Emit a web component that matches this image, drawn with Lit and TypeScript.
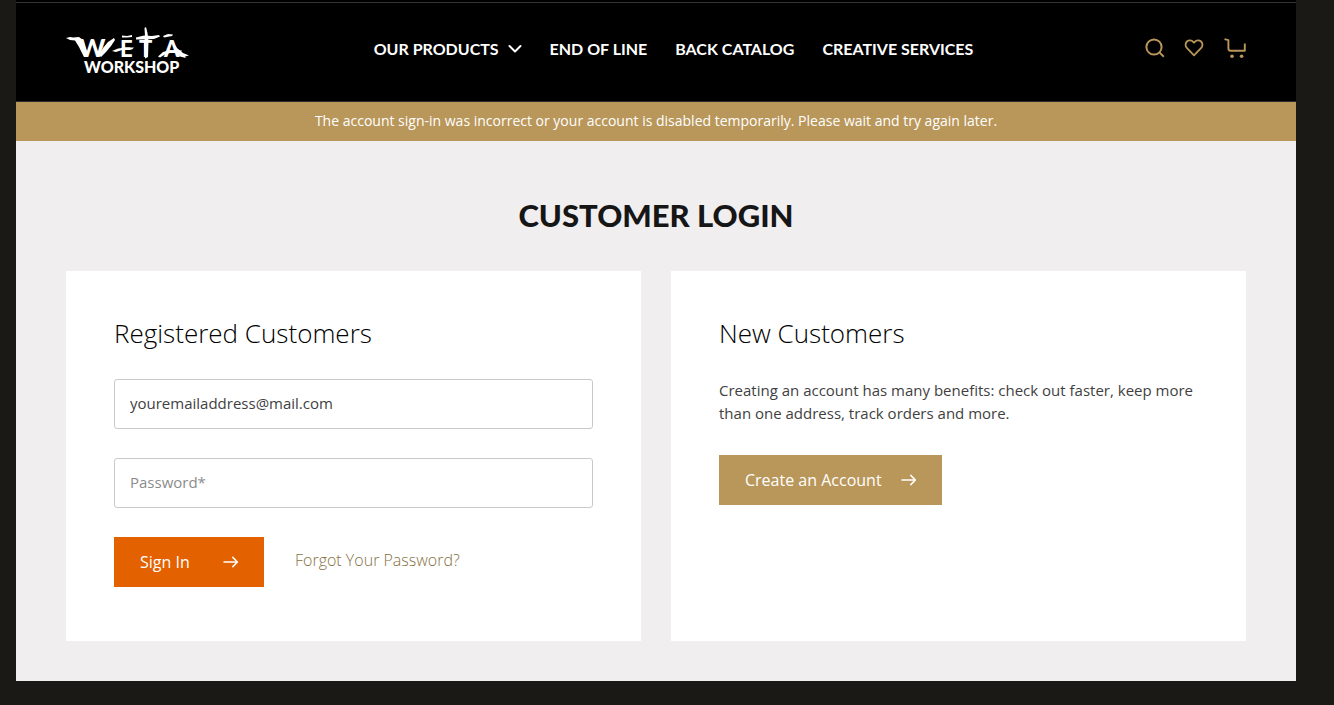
import { LitElement, html, css, svg } from "lit";
import { customElement, property, state } from "lit/decorators.js";

const arrow = html`<svg class="arrow" viewBox="0 0 16 12" width="16" height="12" aria-hidden="true">
  <path d="M1 6H14.2M9.8 1.4L14.4 6L9.8 10.6" fill="none" stroke="currentColor" stroke-width="1.5" stroke-linecap="round" stroke-linejoin="round" />
</svg>`;

@customElement("site-logo")
export class SiteLogo extends LitElement {
  static styles = css`
    :host { display: block; }
    .logo { display: block; fill: #fff; font-family: Lato, sans-serif; font-weight: 900; }
    .big { font-size: 25px; }
    .mid { font-size: 22px; }
    .small { font-size: 16px; }
  `;
  render() {
    return html`<svg class="logo" width="124" height="48" viewBox="0 0 124 48" role="img" aria-label="Weta Workshop">
      <text class="big" x="13" y="30">W</text>
      <text class="mid" x="54" y="30">E</text>
      <text class="mid" x="73" y="30">T</text>
      <text class="mid" x="98" y="30">A</text>
      ${svg`
        <path d="M0 11L4 10L7 10.5L13 10L17 13L22 27L21 30L18 30L13 20L9 13.500L4 13Z" />
        <path d="M33 28L37 21L42 15L48 11L49 13L45 19L40 25L35 30Z" />
        <path d="M56 8.5L61 9L66 8L66 10L61 10.5L56 10.5Z" />
        <path d="M46 24L52 21.500L60 20.500L68 20.5L66 22.500L56 23L50 25Z" />
        <path d="M70 10.5L78 8.5L86 9L93 8L94 9.5L88 12L76 12.5L70 12.500Z" />
        <path d="M78.5 1L80 0L81.500 6L82.500 14L82 30L79 31.500L78 18L79 9Z" />
        <path d="M97 9L102 7L107 7.5L106 9L98 10.500Z" />
        <path d="M92 29.500L97 25L104 23L116 23.500L115 25L106 25.500L99 27.500L94 30.5Z" />
        <path d="M107 15L111 21L117 26L123 28.5L119 29.5L120 31L114 29.500L109 25Z" />
      `}
      <text class="small" x="18" y="46">WORKSHOP</text>
    </svg>`;
  }
}

@customElement("site-header")
export class SiteHeader extends LitElement {
  @property({ type: Array }) items: string[] = [];
  static styles = css`
    :host { display: block; background: #000; border-top: 1px solid #33332f; border-bottom: 1px solid #2b2b30; }
    .bar { display: flex; align-items: center; justify-content: space-between; gap: 20px; height: 98px; padding: 0 49px 0 50px; }
    nav { display: flex; align-items: center; gap: 28px; padding: 0 0 6px 12px; }
    a { color: #fff; text-decoration: none; }
    nav a { display: flex; align-items: center; gap: 9px; font: 700 16px/20px Lato, sans-serif; text-transform: uppercase; white-space: nowrap; }
    .tools { display: flex; justify-content: flex-end; align-items: center; gap: 19px; padding-bottom: 8px; }
    .tools a { color: #b99659; display: flex; }
    site-logo { padding-bottom: 2px; }
  `;
  render() {
    return html`<header class="bar">
      <a href="#home"><site-logo></site-logo></a>
      <nav aria-label="Main">
        ${this.items.map((item, i) => html`<a href="#">${item}${i === 0
          ? html`<svg width="14" height="10" viewBox="0 0 14 10" aria-hidden="true"><path d="M1.5 2L7 7.5L12.5 2" fill="none" stroke="#fff" stroke-width="2" stroke-linecap="round" stroke-linejoin="round" /></svg>`
          : ""}</a>`)}
      </nav>
      <div class="tools">
        <a href="#search" aria-label="Search"><svg width="20" height="20" viewBox="0 0 20 20" fill="none" stroke="currentColor" stroke-width="2"><circle cx="9" cy="9" r="7.6" /><path d="M14.4 14.4L18.8 18.8" /></svg></a>
        <a href="#wishlist" aria-label="Wish list"><svg width="20" height="20" viewBox="0 0 20 20" fill="none" stroke="currentColor" stroke-width="1.8" stroke-linejoin="round"><path d="M10 17.3L3 10.2C1.1 8.2 1.1 5.2 2.9 3.5C4.8 1.8 7.6 2 9.2 3.8L10 4.7L10.8 3.8C12.4 2 15.2 1.8 17.1 3.5C18.9 5.2 18.9 8.2 17 10.2Z" /></svg></a>
        <a href="#cart" aria-label="Cart"><svg width="24" height="20" viewBox="0 0 24 20" fill="none" stroke="currentColor" stroke-width="1.9" stroke-linejoin="round"><path d="M1.5 1.2L5.4 2.2V10.6Q5.4 12.8 7.6 12.8H21.8V5.5" /><circle cx="9" cy="18.2" r="1.8" fill="currentColor" stroke="none" /><circle cx="18.6" cy="18.2" r="1.8" fill="currentColor" stroke="none" /></svg></a>
      </div>
    </header>`;
  }
}

@customElement("app-root")
export class AppRoot extends LitElement {
  @state() private email = "youremailaddress@mail.com";
  static styles = css`
    :host { display: block; box-sizing: border-box; min-height: 100vh; padding: 2px 38px 24px 16px; background: #1a1916; font-family: "Open Sans", sans-serif; color: #3f3f3f;
      background-image: linear-gradient(#000, #000); background-size: calc(100% - 54px) 2px; background-position: 16px 0; background-repeat: no-repeat; }
    * { box-sizing: border-box; }
    .notice { margin: 0; padding: 9px 50px 10px; background: #b99659; color: #fff; text-align: center; font: 500 14px/20px "Open Sans", sans-serif; }
    main { background: #f1eeef; padding: 54px 50px 40px; }
    h1 { margin: 0 0 36px; text-align: center; color: #161616; font: 900 31px/40px Lato, sans-serif; }
    .cards { display: grid; grid-template-columns: repeat(auto-fit, minmax(400px, 1fr)); gap: 30px; }
    .card { background: #fff; padding: 46px 48px 54px; }
    h2 { margin: 0 0 30px; color: #000; font: 300 26px/32px "Open Sans", sans-serif; }
    form { margin: 0; }
    .field { display: block; width: 100%; height: 50px; margin-bottom: 29px; padding: 0 15px 2px; border: 1px solid #c9c9c9; border-radius: 3px; background: #fff; color: #3f3f3f; font: 400 15px/20px "Open Sans", sans-serif; outline: none; }
    .field::placeholder { color: #8c8c8c; opacity: 1; }
    .row { display: flex; align-items: center; gap: 31px; }
    .btn { display: inline-flex; align-items: center; justify-content: space-between; height: 50px; padding: 0 25px 0 26px; border: 0; color: #fff; font: 500 16px/20px "Open Sans", sans-serif; text-decoration: none; cursor: pointer; }
    .signin { width: 150px; background: #e46100; }
    .create { width: 223px; background: #b99659; }
    .forgot { color: #85703f; font: 300 16px/20px "Open Sans", sans-serif; text-decoration: none; padding-bottom: 4px; }
    .copy { margin: 0 0 30px; font-size: 15px; line-height: 23px; }
  `;
  render() {
    return html`
      <site-header .items=${["Our Products", "End of Line", "Back Catalog", "Creative Services"]}></site-header>
      <p class="notice" role="alert">The account sign-in was incorrect or your account is disabled temporarily. Please wait and try again later.</p>
      <main>
        <h1>CUSTOMER LOGIN</h1>
        <div class="cards">
          <section class="card">
            <h2>Registered Customers</h2>
            <form @submit=${(e: Event) => e.preventDefault()}>
              <input class="field" type="email" aria-label="Email" .value=${this.email} @input=${(e: Event) => (this.email = (e.target as HTMLInputElement).value)} />
              <input class="field" type="password" aria-label="Password" placeholder="Password*" />
              <div class="row">
                <button class="btn signin" type="submit">Sign In ${arrow}</button>
                <a class="forgot" href="#forgot">Forgot Your Password?</a>
              </div>
            </form>
          </section>
          <section class="card">
            <h2>New Customers</h2>
            <p class="copy">Creating an account has many benefits: check out faster, keep more than one address, track orders and more.</p>
            <a class="btn create" href="#create">Create an Account ${arrow}</a>
          </section>
        </div>
      </main>`;
  }
}
